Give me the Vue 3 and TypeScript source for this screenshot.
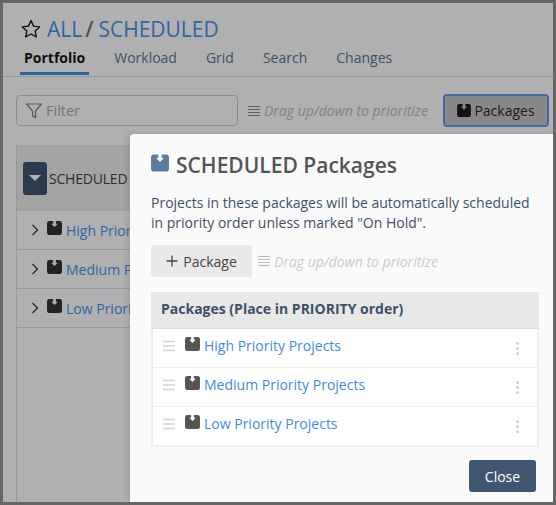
<script setup lang="ts">
const tabs = ['Portfolio', 'Workload', 'Grid', 'Search', 'Changes']
const packages = ['High Priority Projects', 'Medium Priority Projects', 'Low Priority Projects']
const boxPath = 'M2.500 0H6.500V3H4.500L8 6.500L11.500 3H9.500V0H13.500A2.500 2.500 0 0 1 16 2.500V12.500A2.500 2.500 0 0 1 13.500 15H2.500A2.500 2.500 0 0 1 0 12.500V2.500A2.500 2.500 0 0 1 2.500 0Z'
</script>

<template>
  <div class="frame">
    <header class="head">
      <div class="title-row">
        <svg class="star" viewBox="0 0 20 20"><path d="M10 1.600l2.600 5.500 6 .8-4.400 4.100 1.100 5.900-5.300-2.900-5.300 2.900 1.100-5.900L1.400 7.900l6-.8z" fill="none" stroke="#1f1f1f" stroke-width="1.400" stroke-linejoin="round"/></svg>
        <span class="crumb">ALL</span>
        <span class="slash">/</span>
        <span class="crumb">SCHEDULED</span>
      </div>
      <nav class="tabs">
        <span v-for="(t, i) in tabs" :key="t" class="tab" :class="{ active: i === 0 }">{{ t }}</span>
      </nav>
    </header>

    <div class="toolbar">
      <div class="filter">
        <svg class="funnel" viewBox="0 0 18 18"><path d="M1.500 2h15l-6 7v6.800l-3-2V9z" fill="none" stroke="#7f7f7f" stroke-width="1.200" stroke-linejoin="round"/></svg>
        <span>Filter</span>
      </div>
      <div class="hint dim-hint">
        <svg class="bars" viewBox="0 0 12 12"><path d="M0 1.500h12M0 4.500h12M0 7.500h12M0 10.500h12" stroke="#8b8b8b" stroke-width="1"/></svg>
        <em>Drag up/down to prioritize</em>
      </div>
      <button class="pk-btn">
        <svg class="box-sm" viewBox="0 0 16 15"><path :d="boxPath" fill="#1c1c1c"/></svg>
        Packages
      </button>
    </div>

    <section class="panel">
      <div class="panel-head">
        <span class="caret-btn"><i></i></span>
        <span>SCHEDULED</span>
      </div>
      <div v-for="p in packages" :key="p" class="panel-row">
        <svg class="chev" viewBox="0 0 8 12"><path d="M1.500 1l5 5-5 5" fill="none" stroke="#2f3d4d" stroke-width="1.300"/></svg>
        <svg class="box" viewBox="0 0 16 15"><path :d="boxPath" fill="#333"/></svg>
        <a>{{ p }}</a>
      </div>
    </section>

    <div class="scrim"></div>

    <div class="modal">
      <h2>
        <svg class="box-lg" viewBox="0 0 16 15"><path :d="boxPath" fill="#5d7c9d"/></svg>
        SCHEDULED Packages
      </h2>
      <p>Projects in these packages will be automatically scheduled in priority order unless marked "On Hold".</p>
      <div class="actions">
        <button class="add">
          <svg viewBox="0 0 12 12"><path d="M6 0.500v11M0.500 6h11" stroke="#444" stroke-width="1.300"/></svg>
          Package
        </button>
        <div class="hint">
          <svg class="bars" viewBox="0 0 12 12"><path d="M0 1.500h12M0 4.500h12M0 7.500h12M0 10.500h12" stroke="#bbb" stroke-width="1"/></svg>
          <em>Drag up/down to prioritize</em>
        </div>
      </div>
      <div class="table">
        <div class="table-head">Packages (Place in PRIORITY order)</div>
        <div v-for="p in packages" :key="p" class="table-row">
          <svg class="grip" viewBox="0 0 12 12"><path d="M0 1.500h12M0 6h12M0 10.500h12" stroke="#d4d4d4" stroke-width="1.500"/></svg>
          <svg class="box" viewBox="0 0 16 15"><path :d="boxPath" fill="#555"/></svg>
          <a>{{ p }}</a>
          <span class="dots"><i></i><i></i><i></i></span>
        </div>
      </div>
      <div class="footer"><button class="close">Close</button></div>
    </div>
  </div>
</template>

<style>
html, body { margin: 0; padding: 0; }
</style>

<style scoped>
.frame {
  position: relative;
  box-sizing: border-box;
  width: 556px;
  height: 505px;
  border: 3px solid #666;
  background: #fff;
  overflow: hidden;
  font-family: "Open Sans", "Liberation Sans", sans-serif;
  color: #444;
}
.head { height: 74px; border-bottom: 1px solid #ddd; box-sizing: border-box; }
.title-row { display: flex; align-items: center; padding: 12px 0 0 18px; height: 28px; }
.star { width: 20px; height: 20px; margin-right: 6px; }
.crumb { font-size: 21px; line-height: 28px; color: #4493f0; }
.slash { font-size: 21px; color: #777; margin: 0 5px 0 3px; font-weight: 600; }
.tabs { display: flex; padding: 0 0 0 17px; }
.tab { font-size: 14px; line-height: 20px; color: #5b7597; padding: 5px 4px 6px; margin-right: 21px; }
.tab.active { color: #151515; font-weight: 700; border-bottom: 3px solid #3d90f2; padding-bottom: 4px; }

.toolbar { display: flex; align-items: center; padding: 17px 0 0 13px; height: 33px; }
.filter {
  box-sizing: border-box; width: 222px; height: 31px; border: 1px solid #ccc; border-radius: 4px;
  display: flex; align-items: center; padding-left: 8px; gap: 3px; font-size: 14.500px; color: #aaa;
}
.funnel { width: 18px; height: 18px; }
.hint { display: flex; align-items: center; gap: 4px; font-size: 14px; color: #ccc; white-space: nowrap; }
.dim-hint { margin-left: 10px; color: #bdbdbd; }
.hint em { font-style: italic; }
.bars { width: 12px; height: 12px; }
.pk-btn {
  box-sizing: border-box; margin-left: 15px; width: 106px; height: 33px; border: 2px solid #5c9cf0; border-radius: 4px;
  background: #c6c6c6; display: flex; align-items: center; justify-content: center; gap: 3px;
  font: 14px "Open Sans", sans-serif; color: #2b2b2b; padding: 0;
}
.box { width: 15px; height: 14px; flex: none; }
.box-sm { width: 14px; height: 13px; flex: none; }

.panel { margin: 18px 0 0 13px; border-left: 1px solid #ddd; width: 200px; height: 360px; }
.panel-head {
  height: 66px; background: #eee; display: flex; align-items: center; gap: 2px; padding-left: 6px;
  font-size: 14px; color: #444; letter-spacing: -0.2px;
}
.caret-btn { width: 24px; height: 33px; border-radius: 3px; background: #3e5671; display: flex; align-items: center; justify-content: center; }
.caret-btn i { width: 0; height: 0; border-left: 6px solid transparent; border-right: 6px solid transparent; border-top: 6px solid #fff; }
.panel-row { height: 39px; box-sizing: border-box; border-bottom: 1px solid #ddd; display: flex; align-items: center; padding-left: 14px; font-size: 14px; white-space: nowrap; }
.chev { width: 8px; height: 12px; margin-right: 8px; flex: none; }
.panel-row .box { margin-top: -4px; }
.panel-row a { color: #4493f0; margin-left: 4px; }

.scrim { position: absolute; inset: 0; background: rgba(0, 0, 0, 0.31); }

.modal {
  position: absolute; left: 127px; top: 131px; right: 0; bottom: 0; background: #fafafa; border-radius: 4px 0 0 0;
  padding: 18px 17px 0 21px; box-shadow: -2px 0 6px rgba(0, 0, 0, 0.12); box-sizing: border-box;
}
h2 { margin: 0; display: flex; align-items: center; gap: 7px; font-size: 21px; line-height: 27px; font-weight: 600; color: #555; }
.box-lg { width: 18px; height: 18px; margin-top: -5px; flex: none; }
p { margin: 14px 0 0; font-size: 14px; line-height: 20px; color: #3f5168; width: 385px; }
.actions { display: flex; align-items: center; gap: 6px; margin-top: 12px; }
.add {
  box-sizing: border-box; width: 101px; height: 32px; background: #e9e9e9; border: 0; border-radius: 3px;
  display: flex; align-items: center; justify-content: center; gap: 5px; font: 14px "Open Sans", sans-serif; color: #444; padding: 0;
}
.add svg { width: 12px; height: 12px; }
.table { margin-top: 15px; width: 388px; border-bottom: 2px solid #eee; border-left: 2px solid #eee; border-right: 2px solid #eee; box-sizing: border-box; }
.table-head { margin: 0 -2px; height: 37px; line-height: 33px; padding-left: 10px; background: #e8e8e8; border-bottom: 1px solid #ddd; box-sizing: border-box; font-size: 14px; font-weight: 700; color: #3f5168; }
.table-row { height: 39px; box-sizing: border-box; background: #fff; border-bottom: 1px solid #eee; display: flex; align-items: center; padding: 0 0 5px 10px; font-size: 14px; }
.table-row:last-child { border-bottom: 0; height: 38px; }
.grip { width: 12px; height: 12px; margin: 0 11px 0 0; flex: none; }
.table-row .box { margin: -3px 4px 0 -1px; }
.table-row a { color: #3f8be6; }
.dots { margin: 5px 18px 0 auto; display: flex; flex-direction: column; gap: 2px; }
.dots i { width: 3px; height: 3px; border-radius: 50%; background: #d0d0d0; }
.footer { display: flex; justify-content: flex-end; margin-top: 13px; }
.close { width: 67px; height: 32px; border: 0; border-radius: 3px; background: #3f5670; color: #fff; font: 14px "Open Sans", sans-serif; padding: 0; }
</style>
